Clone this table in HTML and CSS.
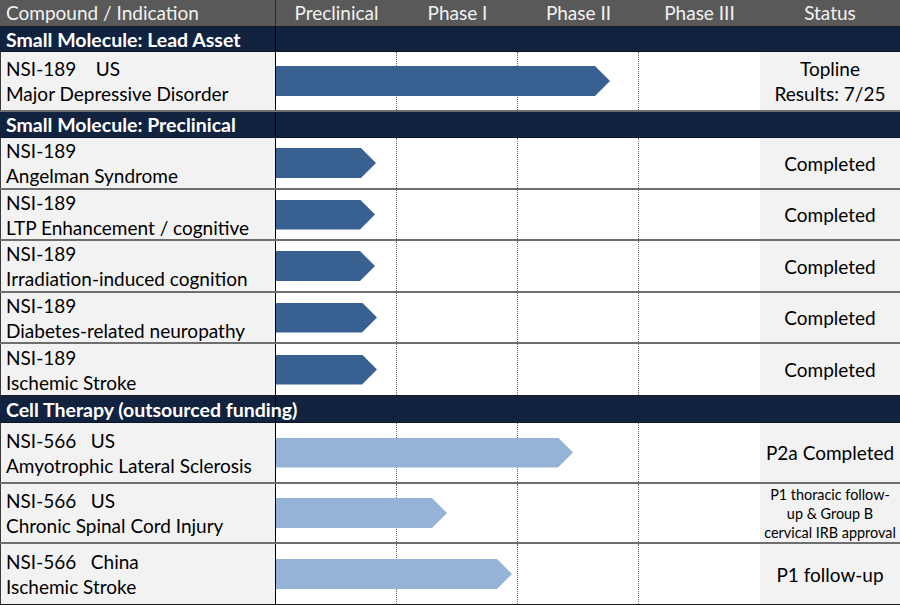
FILE: index.html
```html
<!DOCTYPE html>
<html>
<head>
<meta charset="utf-8">
<link rel="stylesheet" href="styles.css">
</head>
<body>
<div class="chart">
  <div class="row head">
    <div class="name">Compound / Indication</div>
    <div class="phases">
      <div class="ph">Preclinical</div><div class="ph">Phase I</div><div class="ph">Phase II</div><div class="ph">Phase III</div>
    </div>
    <div class="status">Status</div>
  </div>

  <div class="row section s25"><div class="name">Small Molecule: Lead Asset</div></div>
  <div class="row item h60">
    <div class="name"><span>NSI-189&nbsp;&nbsp;&nbsp; US</span><span>Major Depressive Disorder</span></div>
    <div class="track"><i></i><i></i><i></i><i></i><div class="bar dark" style="width:334px"></div></div>
    <div class="status">Topline<br>Results: 7/25</div>
  </div>

  <div class="row section s26"><div class="name">Small Molecule: Preclinical</div></div>
  <div class="row item h52">
    <div class="name"><span>NSI-189</span><span>Angelman Syndrome</span></div>
    <div class="track"><i></i><i></i><i></i><i></i><div class="bar dark" style="width:100px"></div></div>
    <div class="status">Completed</div>
  </div>
  <div class="row item h51">
    <div class="name"><span>NSI-189</span><span>LTP Enhancement / cognitive</span></div>
    <div class="track"><i></i><i></i><i></i><i></i><div class="bar dark" style="width:99px"></div></div>
    <div class="status">Completed</div>
  </div>
  <div class="row item h52">
    <div class="name"><span>NSI-189</span><span>Irradiation-induced cognition</span></div>
    <div class="track"><i></i><i></i><i></i><i></i><div class="bar dark" style="width:99px"></div></div>
    <div class="status">Completed</div>
  </div>
  <div class="row item h51">
    <div class="name"><span>NSI-189</span><span>Diabetes-related neuropathy</span></div>
    <div class="track"><i></i><i></i><i></i><i></i><div class="bar dark" style="width:101px"></div></div>
    <div class="status">Completed</div>
  </div>
  <div class="row item h52 last">
    <div class="name"><span>NSI-189</span><span>Ischemic Stroke</span></div>
    <div class="track"><i></i><i></i><i></i><i></i><div class="bar dark" style="width:101px"></div></div>
    <div class="status">Completed</div>
  </div>

  <div class="row section s27"><div class="name">Cell Therapy (outsourced funding)</div></div>
  <div class="row item h61">
    <div class="name"><span>NSI-566&nbsp;&nbsp; US</span><span>Amyotrophic Lateral Sclerosis</span></div>
    <div class="track"><i></i><i></i><i></i><i></i><div class="bar light" style="width:297px"></div></div>
    <div class="status">P2a Completed</div>
  </div>
  <div class="row item h60">
    <div class="name"><span>NSI-566&nbsp;&nbsp; US</span><span>Chronic Spinal Cord Injury</span></div>
    <div class="track"><i></i><i></i><i></i><i></i><div class="bar light" style="width:171px"></div></div>
    <div class="status small">P1 thoracic follow-<br>up &amp; Group B<br>cervical IRB approval</div>
  </div>
  <div class="row item h61 end">
    <div class="name"><span>NSI-566&nbsp;&nbsp; China</span><span>Ischemic Stroke</span></div>
    <div class="track"><i></i><i></i><i></i><i></i><div class="bar light" style="width:236px"></div></div>
    <div class="status">P1 follow-up</div>
  </div>
</div>
</body>
</html>
```
FILE: styles.css
```css
* { box-sizing: border-box; }
html, body { margin: 0; padding: 0; background: #ffffff; }
body {
  font-family: "Lato", "Open Sans", sans-serif;
  font-size: 19px;
  color: #000;
  width: 900px;
  height: 605px;
  overflow: hidden;
}
.chart { width: 900px; display: flex; flex-direction: column; }

.row {
  display: grid;
  grid-template-columns: 276px 484px 140px;
  grid-template-rows: minmax(0, 1fr);
  flex: none;
  overflow: hidden;
}

/* header */
.head {
  height: 27px;
  background: #595959;
  color: #f2f2f2;
  border-bottom: 1px solid #1a1a1a;
}
.head .name {
  padding-left: 6px;
  line-height: 26px;
  border-right: 1px solid #2a2a2a;
}
.head .phases {
  display: grid;
  grid-template-columns: repeat(4, 121px);
}
.head .ph, .head .status {
  text-align: center;
  line-height: 26px;
}

/* section rows */
.section {
  background: #12233f;
  color: #ffffff;
  font-weight: 700;
  font-size: 19.5px;
  grid-template-columns: 276px 1fr;
  border-bottom: 1px solid #0b1526;
}
.section .name {
  padding-left: 6px;
  border-right: 1px solid #000;
  display: flex;
  align-items: center;
  white-space: nowrap;
}
.s25 { height: 25px; }
.s26 { height: 26px; }
.s27 { height: 27px; }

/* item rows */
.item { border-bottom: 2px solid #6e6e6e; }
.item.last, .item.end { border-bottom: 1px solid #1a1a1a; }
.h60 { height: 60px; }
.h61 { height: 61px; }
.h52 { height: 52px; }
.h51 { height: 51px; }

.item .name {
  background: #f2f2f2;
  border-right: 1px solid #000;
  border-left: 1px solid #3a3a3a;
  padding-left: 5px;
  display: flex;
  flex-direction: column;
  justify-content: center;
  line-height: 25px;
  white-space: nowrap;
}

.track {
  display: grid;
  grid-template-columns: repeat(4, 121px);
  grid-template-rows: minmax(0, 1fr);
  background: #ffffff;
}
.track i {
  grid-row: 1;
  border-right: 1px dotted #6a6a6a;
}
.track i:nth-child(4) { border-right: none; }
.track i:nth-child(1) { grid-column: 1; }
.track i:nth-child(2) { grid-column: 2; }
.track i:nth-child(3) { grid-column: 3; }
.track i:nth-child(4) { grid-column: 4; }

.bar {
  grid-row: 1;
  grid-column: 1 / -1;
  justify-self: start;
  align-self: center;
  height: 30px;
  clip-path: polygon(0 0, calc(100% - 15px) 0, 100% 50%, calc(100% - 15px) 100%, 0 100%);
}
.bar.dark { background: #386192; }
.bar.light { background: #95b3d7; }

.item .status {
  background: #f2f2f2;
  display: flex;
  align-items: center;
  justify-content: center;
  text-align: center;
  line-height: 25px;
}
.item .status.small {
  font-size: 14.4px;
  line-height: 19px;
}
```
